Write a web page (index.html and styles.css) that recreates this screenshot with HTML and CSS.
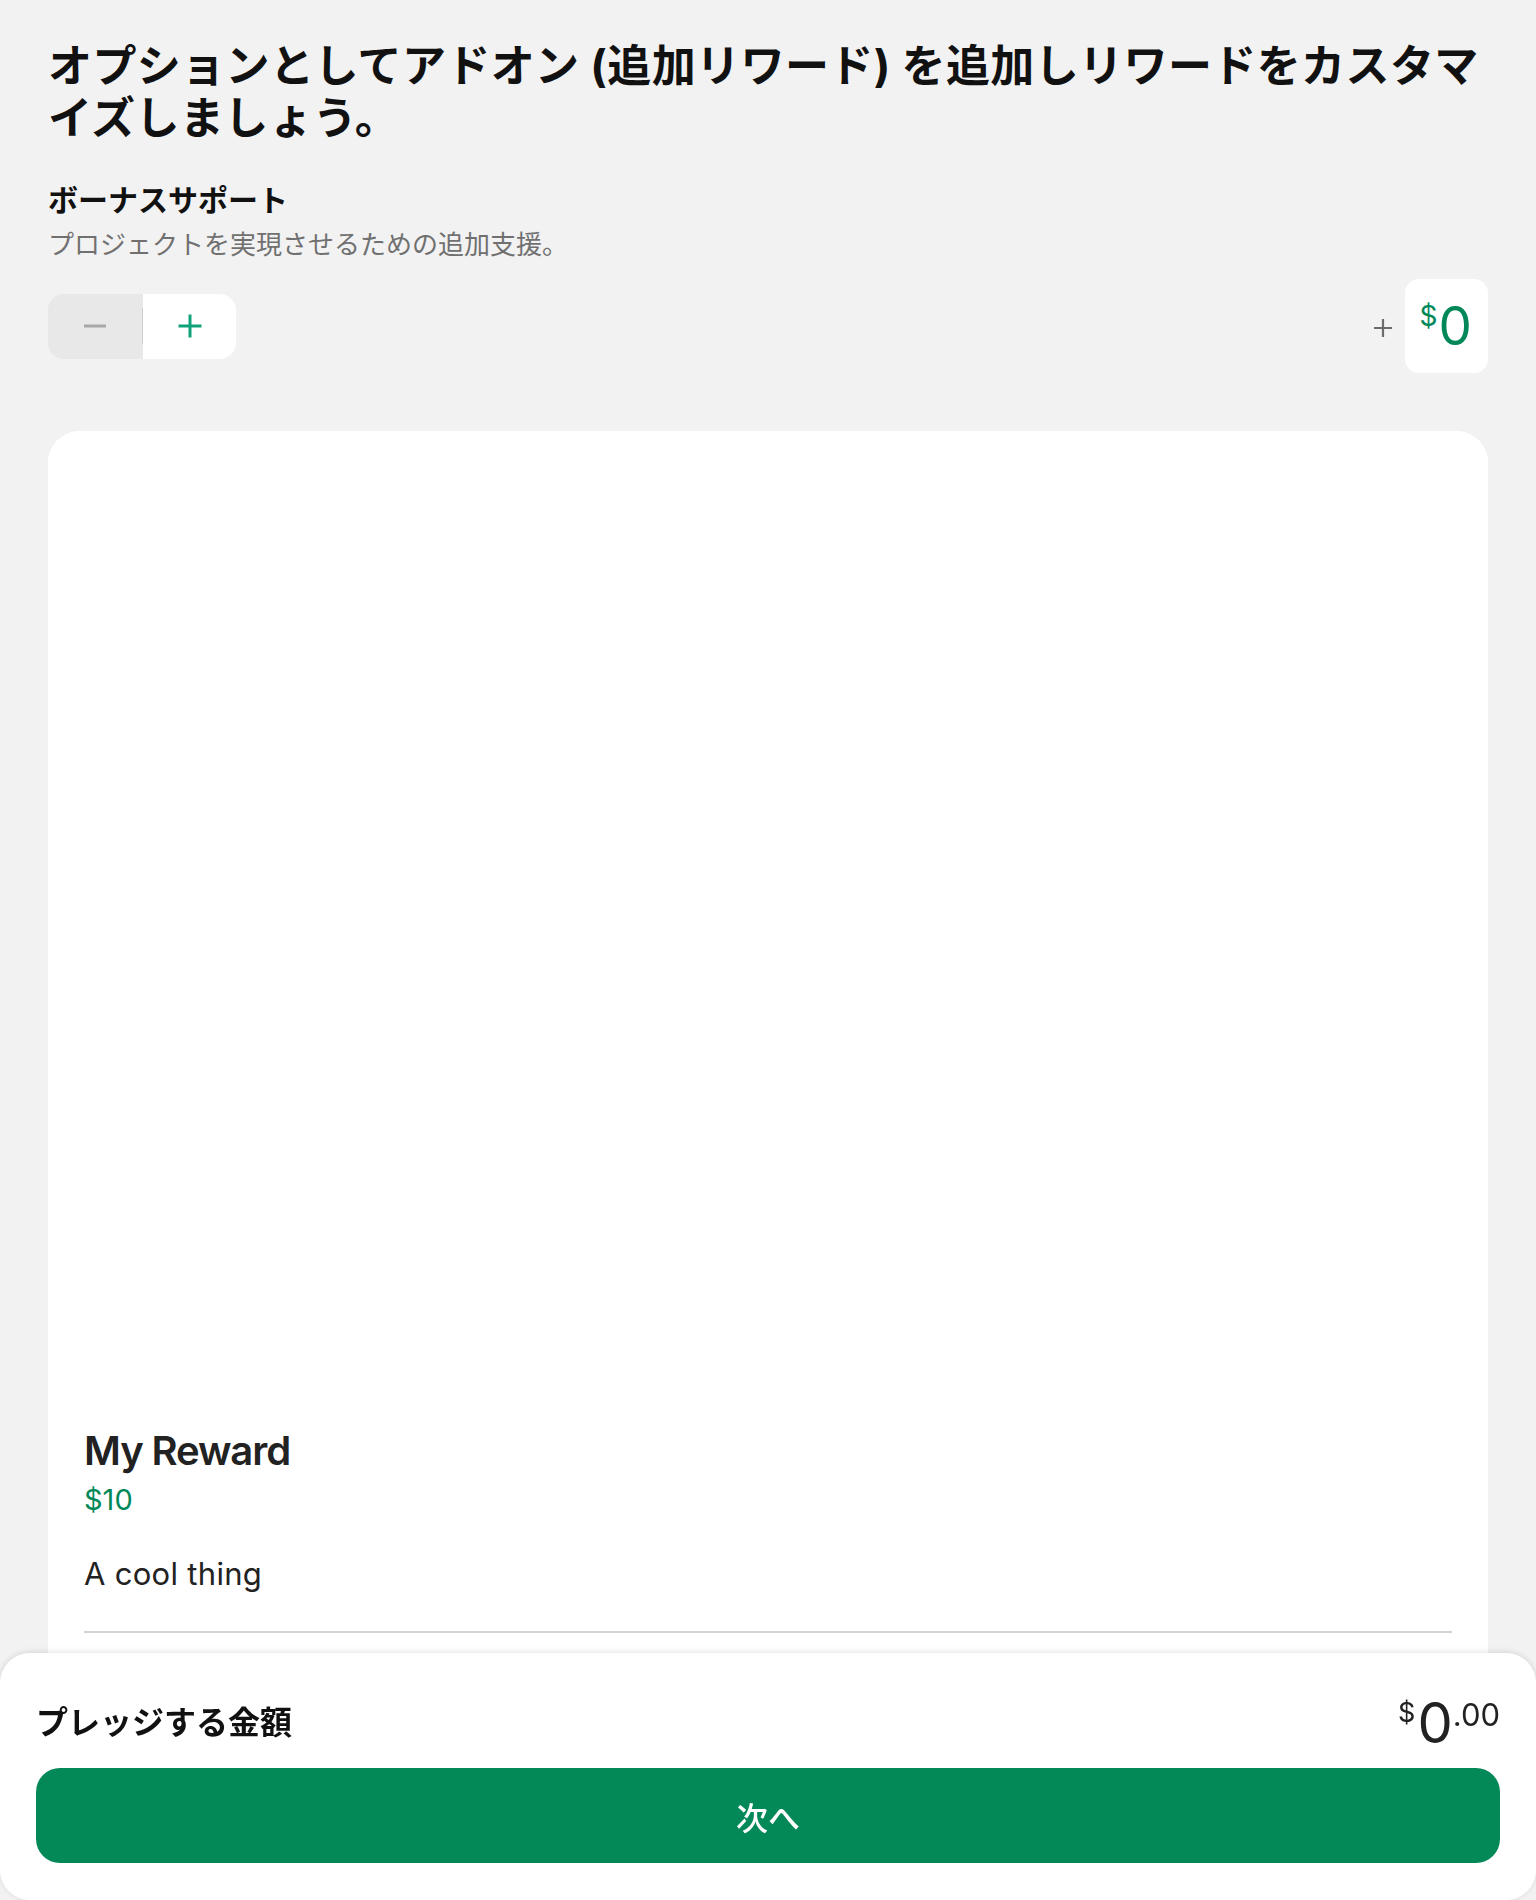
FILE: index.html
```html
<!DOCTYPE html>
<html lang="ja">
<head>
<meta charset="utf-8">
<title>アドオン</title>
<link rel="stylesheet" href="styles.css">
</head>
<body>
<div class="page">
  <h1 class="title">オプションとしてアドオン (追加リワード) を追加しリワードをカスタマイズしましょう。</h1>

  <section class="bonus">
    <h2 class="bonus-title">ボーナスサポート</h2>
    <p class="bonus-sub">プロジェクトを実現させるための追加支援。</p>
    <div class="bonus-row">
      <div class="stepper">
        <button class="step step-minus" aria-label="減らす">
          <svg width="24" height="24" viewBox="0 0 24 24"><path d="M1 12h22" stroke="#a8a8a8" stroke-width="3" fill="none"/></svg>
        </button>
        <span class="step-sep"></span>
        <button class="step step-plus" aria-label="増やす">
          <svg width="24" height="24" viewBox="0 0 24 24"><path d="M0.5 12h23M12 0.5v23" stroke="#0fa27a" stroke-width="3" fill="none"/></svg>
        </button>
      </div>
      <div class="bonus-amount">
        <svg class="plus-sign" width="18" height="18" viewBox="0 0 18 18"><path d="M0 9h18M9 0v18" stroke="#6b6b6b" stroke-width="2.2" fill="none"/></svg>
        <div class="amount-box"><span class="amt-cur">$</span><span class="amt-num">0</span></div>
      </div>
    </div>
  </section>

  <article class="card">
    <div class="card-media"></div>
    <div class="card-body">
      <h3 class="reward-name">My Reward</h3>
      <div class="reward-price">$10</div>
      <p class="reward-desc">A cool thing</p>
      <div class="divider"></div>
    </div>
  </article>
</div>

<footer class="sheet">
  <div class="sheet-row">
    <span class="sheet-label">プレッジする金額</span>
    <div class="total"><span class="t-cur">$</span><span class="t-int">0</span><span class="t-dec">.00</span></div>
  </div>
  <button class="next-btn">次へ</button>
</footer>
</body>
</html>
```

FILE: styles.css
```css
* { box-sizing: border-box; }

html, body {
  margin: 0;
  padding: 0;
  background: #f2f2f2;
  font-family: Inter, "Noto Sans CJK JP", sans-serif;
  color: #111;
}

.page {
  height: 1900px;
  overflow: hidden;
  padding: 40px 48px 0 48px;
}

.title {
  margin: 0;
  font-family: Inter, "Noto Sans CJK JP", sans-serif;
  font-size: 44px;
  line-height: 52px;
  font-weight: 700;
  letter-spacing: 0.4px;
  color: #111;
}

.bonus { margin-top: 38px; }

.bonus-title {
  margin: 0;
  font-size: 30px;
  line-height: 36px;
  font-weight: 700;
  color: #111;
}

.bonus-sub {
  margin: 11px 0 0 0;
  font-size: 26px;
  line-height: 32px;
  font-weight: 400;
  color: #707070;
}

.bonus-row {
  margin-top: 18px;
  display: flex;
  justify-content: space-between;
  align-items: center;
}

.stepper {
  display: flex;
  align-items: center;
  width: 188px;
  height: 65px;
  border-radius: 16px;
  overflow: hidden;
  background: #e8e8e8;
}

.step {
  border: 0;
  padding: 0;
  margin: 0;
  height: 65px;
  display: flex;
  align-items: center;
  justify-content: center;
  cursor: pointer;
}

.step svg { display: block; }

.step-minus { width: 94px; background: #e8e8e8; }
.step-sep { width: 1px; height: 36px; background: #cdcdcd; }
.step-plus { width: 93px; background: #fff; }

.bonus-amount {
  display: flex;
  align-items: center;
  gap: 13px;
}

.plus-sign { display: block; margin-top: 4px; }

.amount-box {
  height: 94px;
  min-width: 81px;
  padding: 0 16px 0 15px;
  background: #fff;
  border-radius: 14px;
  display: flex;
  align-items: center;
  justify-content: center;
  color: #028858;
}

.amt-cur {
  font-size: 28px;
  line-height: 1;
  align-self: center;
  margin-top: -20px;
  margin-right: 1px;
}

.amt-num {
  font-size: 53px;
  line-height: 1;
  font-weight: 400;
}

.card {
  margin-top: 58px;
  background: #fff;
  border-radius: 32px;
  overflow: hidden;
}

.card-media { height: 960px; background: #fff; }

.card-body { padding: 36px 36px 400px 36px; }

.reward-name {
  margin: 0;
  font-size: 40px;
  line-height: 48px;
  font-weight: 600;
  letter-spacing: -1.1px;
  color: #222;
}

.reward-price {
  margin-top: 8px;
  font-size: 29px;
  line-height: 34px;
  color: #028858;
}

.reward-desc {
  margin: 39px 0 0 0;
  font-size: 31px;
  line-height: 36px;
  letter-spacing: 0.3px;
  color: #222;
}

.divider {
  margin-top: 39px;
  height: 2px;
  background: #d4d4d4;
}

.sheet {
  position: fixed;
  left: 0;
  right: 0;
  bottom: 0;
  height: 247px;
  background: #fff;
  border-radius: 30px;
  box-shadow: 0 -1px 6px rgba(0, 0, 0, 0.12);
  padding: 39px 36px 37px 36px;
}

.sheet-row {
  height: 61px;
  display: flex;
  align-items: center;
  justify-content: space-between;
}

.sheet-label {
  font-size: 32px;
  font-weight: 700;
  color: #111;
  line-height: 40px;
}

.total {
  display: flex;
  align-items: flex-start;
  color: #222;
  line-height: 1;
  margin-right: 0;
}

.t-cur { font-size: 27px; margin-top: 4px; margin-right: 2px; }
.t-int { font-size: 56px; }
.t-dec { font-size: 31px; margin-top: 4px; }

.next-btn {
  margin-top: 15px;
  width: 100%;
  height: 95px;
  border: 0;
  border-radius: 24px;
  background: #038858;
  color: #fff;
  font-family: Inter, "Noto Sans CJK JP", sans-serif;
  font-size: 32px;
  font-weight: 500;
  cursor: pointer;
}
```
